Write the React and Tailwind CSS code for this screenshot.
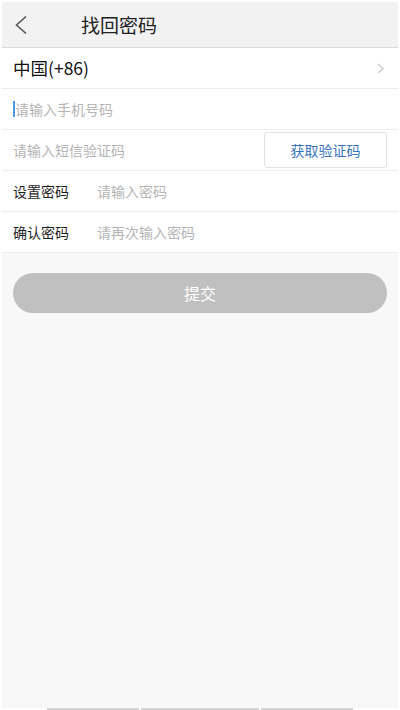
import React from "react";

const font = { fontFamily: '"Noto Sans CJK SC", "Noto Sans", sans-serif' };

export default function App() {
  return (
    <div className="w-[400px] h-[710px] bg-white flex flex-col overflow-hidden" style={font}>
      <div className="flex-1 flex flex-col mx-[2px] mt-[2px] bg-[#f8f8f8]">
        <div className="h-[46px] bg-[#f2f2f2] border-b border-[#dcdcdc] flex items-center">
          <div className="w-[79px] pl-[12px] flex items-center">
            <svg width="14" height="20" viewBox="0 0 14 20" fill="none">
              <path d="M12 1.5 L2.5 10 L12 18.5" stroke="#555" strokeWidth="1.6" />
            </svg>
          </div>
          <span className="text-[19px] text-[#222] leading-none">找回密码</span>
        </div>
        <div className="bg-white">
          <div className="h-[41px] border-b border-[#ececec] flex items-center justify-between pl-[11px] pr-[14px]">
            <span className="text-[17.5px] text-[#111] leading-none">中国(+86)</span>
            <svg width="7" height="11" viewBox="0 0 7 11" fill="none">
              <path d="M1 1 L6 5.5 L1 10" stroke="#c8c8c8" strokeWidth="1.2" />
            </svg>
          </div>
          <div className="h-[41px] border-b border-[#ececec] flex items-center pl-[11px]">
            <span className="w-[2px] h-[16px] bg-[#4a9be0]" />
            <span className="text-[14px] text-[#b4b4b4] leading-none">请输入手机号码</span>
          </div>
          <div className="h-[41px] border-b border-[#ececec] flex items-center justify-between pl-[11px] pr-[11px]">
            <span className="text-[14px] text-[#b4b4b4] leading-none">请输入短信验证码</span>
            <div className="w-[123px] h-[36px] border border-[#e2e2e2] rounded-[3px] flex items-center justify-center">
              <span className="text-[14px] text-[#3a74bd] leading-none">获取验证码</span>
            </div>
          </div>
          <div className="h-[41px] border-b border-[#ececec] flex items-center pl-[11px]">
            <span className="w-[84px] text-[14px] text-[#1e1e1e] leading-none">设置密码</span>
            <span className="text-[14px] text-[#b4b4b4] leading-none">请输入密码</span>
          </div>
          <div className="h-[41px] border-b border-[#ececec] flex items-center pl-[11px]">
            <span className="w-[84px] text-[14px] text-[#1e1e1e] leading-none">确认密码</span>
            <span className="text-[14px] text-[#b4b4b4] leading-none">请再次输入密码</span>
          </div>
        </div>
        <div className="px-[11px] pt-[20px]">
          <div className="h-[40px] rounded-full bg-[#c0c0c0] flex items-center justify-center">
            <span className="text-[16px] text-white leading-none">提交</span>
          </div>
        </div>
      </div>
      <div className="h-[2px] flex">
        <div className="w-[47px]" />
        <div className="w-[92px] bg-[#d4d4d4]" />
        <div className="w-[2px]" />
        <div className="w-[118px] bg-[#d4d4d4]" />
        <div className="w-[2px]" />
        <div className="w-[92px] bg-[#d4d4d4]" />
      </div>
    </div>
  );
}
